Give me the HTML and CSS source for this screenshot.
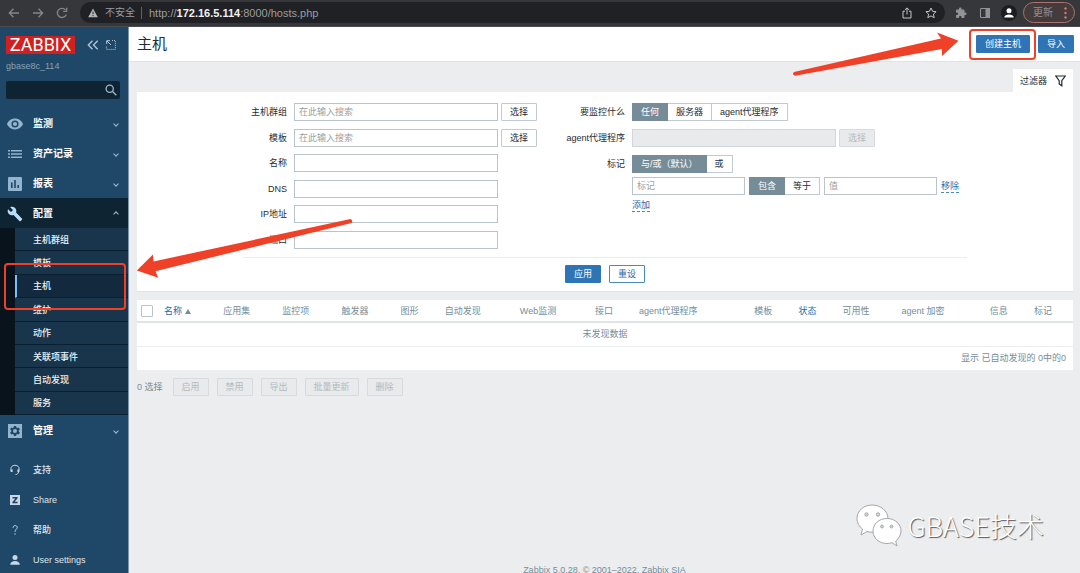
FILE: index.html
```html
<!DOCTYPE html>
<html lang="zh-CN">
<head>
  <meta charset="UTF-8" />
  <title>主机</title>
  <meta name="viewport" content="width=device-width, initial-scale=1.0" />
  <link rel="stylesheet" href="styles.css">
</head>
<body>
  <div class="browser-bar">
    <button class="nav-btn" type="button" aria-label="Back"><svg width="12" height="12" viewBox="0 0 12 12"><path d="M11 6H1.5M5.5 1.8L1.3 6l4.2 4.2"/></svg></button>
    <button class="nav-btn" type="button" aria-label="Forward"><svg width="12" height="12" viewBox="0 0 12 12"><path d="M1 6h9.500M6.500 1.800L10.700 6l-4.200 4.200"/></svg></button>
    <button class="nav-btn" type="button" aria-label="Reload"><svg width="12" height="12" viewBox="0 0 12 12"><path d="M10.300 7.500A4.600 4.600 0 1 1 9.500 2.900M10.700 0.800v3.500H7.200"/></svg></button>
    <div class="address">
      <svg class="warn" width="10" height="10" viewBox="0 0 10 10"><path d="M5 .5L9.800 9.300H.2z"/><path class="warn-mark" d="M5 3.600v2.600M5 7.100v1.100"/></svg>
      <span class="insecure">不安全</span>
      <span class="url">http://<b>172.16.5.114</b>:8000/hosts.php</span>
      <svg class="line-icon" width="12" height="12" viewBox="0 0 12 12"><path d="M4 4.200H2v6.800h8V4.200H8M6 7.500V1M3.900 2.900L6 .9l2.100 2"/></svg>
      <svg class="line-icon star" width="12" height="12" viewBox="0 0 12 12"><path d="M6 1l1.500 3.300 3.600.4-2.700 2.400.8 3.600L6 8.900l-3.200 1.800.8-3.600L.9 4.700l3.600-.4z"/></svg>
    </div>
    <svg class="puzzle" width="12" height="12" viewBox="0 0 24 24"><path d="M20.500 11H19V7a2 2 0 0 0-2-2h-4V3.500a2.500 2.500 0 0 0-5 0V5H4a2 2 0 0 0-2 2v3.800h1.500a2.700 2.700 0 0 1 0 5.400H2V20a2 2 0 0 0 2 2h3.800v-1.500a2.700 2.700 0 0 1 5.400 0V22H17a2 2 0 0 0 2-2v-4h1.500a2.500 2.500 0 0 0 0-5z"/></svg>
    <svg class="panel" width="12" height="12" viewBox="0 0 12 12"><path d="M1.500 1.500h9v9h-9z"/><path class="solid" d="M7 1.500h3.500v9H7z"/></svg>
    <svg class="avatar" width="16" height="16" viewBox="0 0 16 16"><circle class="avatar-bg" cx="8" cy="8" r="8"/><circle cx="8" cy="5.800" r="2.500"/><path d="M3.200 12.500c0-4 9.600-4 9.600 0z"/></svg>
    <button class="update-btn" type="button">更新
      <svg width="3" height="12" viewBox="0 0 3 12"><circle cx="1.500" cy="1.500" r="1.200"/><circle cx="1.500" cy="6" r="1.200"/><circle cx="1.500" cy="10.500" r="1.200"/></svg>
    </button>
  </div>

  <div class="layout">
    <aside class="sidebar">
      <div class="brand">
        <a class="logo" href="#">ZABBIX</a>
        <svg class="collapse" width="12" height="10" viewBox="0 0 12 10"><path d="M5.500 .8L1.300 5l4.200 4.200M10.700 .8L6.500 5l4.200 4.200"/></svg>
        <svg class="kiosk" width="10" height="10" viewBox="0 0 10 10"><path class="dots" d="M6 .6h3.400v8.800H.6V6"/><path d="M5 5L1 1M.7 4V.7H4"/></svg>
      </div>
      <div class="server">gbase8c_114</div>
      <form class="search">
        <input type="text" aria-label="搜索">
        <button type="button" aria-label="搜索"><svg width="12" height="12" viewBox="0 0 12 12"><circle cx="4.700" cy="4.700" r="3.600"/><path d="M7.500 7.500l3.800 3.800"/></svg></button>
      </form>

      <nav>
        <ul class="menu">
          <li><a href="#">
            <svg width="16" height="16" viewBox="0 0 16 16"><path fill-rule="evenodd" d="M8 2.600C4.400 2.600 1.300 4.800 0 8c1.300 3.200 4.400 5.400 8 5.400s6.700-2.200 8-5.400c-1.300-3.200-4.400-5.400-8-5.400zm0 9a3.600 3.600 0 1 1 0-7.200 3.600 3.600 0 0 1 0 7.200zm0-1.500a2.100 2.100 0 1 0 0-4.200 2.100 2.100 0 0 0 0 4.200z"/></svg>
            <span>监测</span><i class="chevron"></i></a></li>
          <li><a href="#">
            <svg width="16" height="16" viewBox="0 0 16 16"><path d="M1 4h2v1.600H1zM4 4h11v1.600H4zM1 7.200h2v1.600H1zM4 7.200h11v1.600H4zM1 10.400h2V12H1zM4 10.400h11V12H4z"/></svg>
            <span>资产记录</span><i class="chevron"></i></a></li>
          <li><a href="#">
            <svg width="16" height="16" viewBox="0 0 16 16"><path fill-rule="evenodd" d="M2 1h12a1 1 0 0 1 1 1v12a1 1 0 0 1-1 1H2a1 1 0 0 1-1-1V2a1 1 0 0 1 1-1zm2 5.500V12h1.600V6.500zM7.200 4v8h1.600V4zm3.200 5v3H12V9z"/></svg>
            <span>报表</span><i class="chevron"></i></a></li>
          <li class="open"><a href="#">
            <svg width="16" height="16" viewBox="0 0 24 24"><path d="M22.700 19l-9.100-9.100c.9-2.300.4-5-1.500-6.900-2-2-5-2.400-7.400-1.300L9 6 6 9 1.600 4.700C.4 7.100.9 10.100 2.900 12.100c1.900 1.900 4.600 2.400 6.900 1.500l9.100 9.100c.4.4 1 .4 1.400 0l2.300-2.300c.5-.4.5-1.100.1-1.400z"/></svg>
            <span>配置</span><i class="chevron up"></i></a>
            <ul class="submenu">
              <li><a href="#">主机群组</a></li>
              <li><a href="#">模板</a></li>
              <li><a class="current" href="#">主机</a></li>
              <li><a href="#">维护</a></li>
              <li><a href="#">动作</a></li>
              <li><a href="#">关联项事件</a></li>
              <li><a href="#">自动发现</a></li>
              <li><a href="#">服务</a></li>
            </ul>
          </li>
          <li><a href="#">
            <svg width="16" height="16" viewBox="0 0 16 16"><path fill-rule="evenodd" d="M1 1h14v14H1zM6.900 3l-.3 1.500-.9.500-1.500-.5-1.100 1.900L4.300 7.500v1L3.100 9.600l1.100 1.900 1.500-.5.900.5.300 1.500h2.200l.3-1.500.9-.5 1.500.5 1.100-1.900-1.200-1.100v-1l1.200-1.100-1.100-1.900-1.500.5-.9-.5L9.100 3zM8 6a2 2 0 1 1 0 4 2 2 0 0 1 0-4z"/></svg>
            <span>管理</span><i class="chevron"></i></a></li>
        </ul>
        <ul class="menu user-menu">
          <li><a href="#">
            <svg class="stroke" width="12" height="12" viewBox="0 0 12 12"><path d="M2.600 7.500C.8 3.500 3 1.300 6 1.300s5.200 2.200 3.400 6.200M9.500 8c-.3 1.700-1.200 2.500-3 2.500"/><path class="thick" d="M2.600 5.500v2.600M9.400 5.500v2.600"/></svg>
            <span>支持</span></a></li>
          <li><a href="#">
            <svg width="12" height="12" viewBox="0 0 12 12"><path fill-rule="evenodd" d="M1 1h10v10H1zM3.500 3v1.400h2.800L3.400 8v1.200h5.200V7.800H5.700l2.900-3.600V3z"/></svg>
            <span>Share</span></a></li>
          <li><a href="#">
            <svg class="stroke" width="12" height="12" viewBox="0 0 12 12"><path d="M4 3.800C4 .8 8.200.9 8.200 3.500 8.200 5.200 6 5.400 6 7.800M6 9.300v1.500"/></svg>
            <span>帮助</span></a></li>
          <li><a href="#">
            <svg width="12" height="12" viewBox="0 0 12 12"><circle cx="6" cy="3.600" r="2.500"/><path d="M1.200 10.700c0-4.800 9.600-4.800 9.600 0z"/></svg>
            <span>User settings</span></a></li>
        </ul>
      </nav>
    </aside>

    <div class="page">
      <header class="page-header">
        <h1>主机</h1>
        <button class="btn primary" type="button">创建主机</button>
        <button class="btn primary" type="button">导入</button>
      </header>

      <main>
        <div class="filter-tab">
          <a href="#">过滤器
            <svg width="11" height="12" viewBox="0 0 11 12"><path d="M.8 1h9.400L6.800 5.600v5.200L4.200 9V5.600z"/></svg>
          </a>
        </div>
        <form class="filter">
          <div class="filter-columns">
            <div class="filter-col left">
              <div class="field"><label for="groups">主机群组</label><input id="groups" type="text" placeholder="在此输入搜索"><button class="btn" type="button">选择</button></div>
              <div class="field"><label for="templates">模板</label><input id="templates" type="text" placeholder="在此输入搜索"><button class="btn" type="button">选择</button></div>
              <div class="field"><label for="name">名称</label><input id="name" type="text"></div>
              <div class="field"><label for="dns">DNS</label><input id="dns" type="text"></div>
              <div class="field"><label for="ip">IP地址</label><input id="ip" type="text"></div>
              <div class="field"><label for="port">端口</label><input id="port" type="text"></div>
            </div>
            <div class="filter-col right">
              <div class="field">
                <span class="label">要监控什么</span>
                <div class="segmented"><button class="on" type="button">任何</button><button type="button">服务器</button><button type="button">agent代理程序</button></div>
              </div>
              <div class="field"><label for="proxy">agent代理程序</label><input id="proxy" type="text" disabled><button class="btn" type="button" disabled>选择</button></div>
              <div class="field tags">
                <span class="label">标记</span>
                <div class="tag-rows">
                  <div class="segmented"><button class="on" type="button">与/或（默认）</button><button type="button">或</button></div>
                  <div class="tag-row">
                    <input type="text" placeholder="标记" aria-label="标记">
                    <div class="segmented"><button class="on" type="button">包含</button><button type="button">等于</button></div>
                    <input type="text" placeholder="值" aria-label="值">
                    <a class="link" href="#">移除</a>
                  </div>
                  <a class="link" href="#">添加</a>
                </div>
              </div>
            </div>
          </div>
          <div class="filter-buttons">
            <button class="btn primary" type="button">应用</button>
            <button class="btn outline" type="button">重设</button>
          </div>
        </form>

        <table class="hosts">
          <colgroup>
            <col class="w-check"><col class="w-m"><col class="w-m"><col class="w-m"><col class="w-m"><col class="w-s"><col class="w-l"><col class="w-l"><col class="w-s"><col class="w-xxl"><col class="w-s"><col class="w-s"><col class="w-m"><col class="w-xl"><col class="w-s"><col class="w-s">
          </colgroup>
          <thead>
            <tr>
              <th><input type="checkbox" aria-label="全选"></th>
              <th><a href="#">名称 <i class="sort"></i></a></th>
              <th>应用集</th>
              <th>监控项</th>
              <th>触发器</th>
              <th>图形</th>
              <th>自动发现</th>
              <th>Web监测</th>
              <th>接口</th>
              <th>agent代理程序</th>
              <th>模板</th>
              <th><a href="#">状态</a></th>
              <th>可用性</th>
              <th>agent 加密</th>
              <th>信息</th>
              <th>标记</th>
            </tr>
          </thead>
          <tbody>
            <tr><td class="nothing" colspan="16">未发现数据</td></tr>
            <tr><td class="stats" colspan="16">显示 已自动发现的 0中的0</td></tr>
          </tbody>
        </table>

        <div class="actions">
          <span>0 选择</span>
          <button class="btn" type="button" disabled>启用</button>
          <button class="btn" type="button" disabled>禁用</button>
          <button class="btn" type="button" disabled>导出</button>
          <button class="btn" type="button" disabled>批量更新</button>
          <button class="btn" type="button" disabled>删除</button>
        </div>
      </main>

      <footer>Zabbix 5.0.28. © 2001–2022, Zabbix SIA</footer>
    </div>
  </div>

  <!-- annotations over the page -->
  <div class="mark mark-create"></div>
  <div class="mark mark-hosts"></div>
  <svg class="arrow arrow-create" width="170" height="48" viewBox="790 30 170 48"><path d="M794 72L941 38.500 937 32.500 958.500 40.800 942 56 942 49 795 75.800Q791.500 74.500 794 72z"/></svg>
  <svg class="arrow arrow-hosts" width="220" height="64" viewBox="136 216 220 64"><path d="M350.500 219L153.500 261.500 153 254.500 136.800 270.500 158.200 277.800 155.500 271.200 351.500 223Q353.500 220.500 350.500 219z"/></svg>
  <div class="watermark">
    <svg width="46" height="44" viewBox="0 0 46 44">
      <path d="M16 1C7.500 1 1 7 1 14.500c0 4.500 2 8 5.500 10.500L5 31l6-3.500c2 .6 4 .8 6 .7 10 0 15-6 15-13.500S25 1 16 1z"/>
      <path d="M31 14.500c-8 0-14 5.500-14 12.500s6 12.500 14 12.500c1.800 0 3.300-.3 5-.8l5 3.300-1.300-5C43 34.500 45 31 45 27c0-7-6-12.500-14-12.500z"/>
      <circle class="eye" cx="10.500" cy="10.500" r="1.700"/><circle class="eye" cx="22" cy="10.500" r="1.700"/>
      <circle class="eye" cx="26" cy="22.500" r="1.400"/><circle class="eye" cx="35.500" cy="22.500" r="1.400"/>
    </svg>
    <span>GBASE技术</span>
  </div>
</body>
</html>
```
FILE: styles.css
```css
* {
  box-sizing: border-box;
}

body {
  margin: 0;
  height: 100vh;
  display: flex;
  flex-direction: column;
  overflow: hidden;
  position: relative;
  font-family: "Liberation Sans", "Noto Sans CJK SC", sans-serif;
  font-size: 9px;
  line-height: 12px;
  color: #1f2c33;
  background: #ebedef;
}

button,
input {
  font: inherit;
  color: inherit;
  margin: 0;
}

a {
  color: #0275b8;
  text-decoration: none;
}

ul {
  list-style: none;
  margin: 0;
  padding: 0;
}

svg {
  flex-shrink: 0;
}

/* Browser bar */
.browser-bar {
  height: 27px;
  flex-shrink: 0;
  display: flex;
  align-items: center;
  padding: 0 5px 1px 8px;
  background: #36373b;
  border-bottom: 1px solid #4a4b4f;
}

.nav-btn {
  display: flex;
  padding: 0;
  margin-right: 12px;
  border: 0;
  background: none;
}

.nav-btn svg {
  fill: none;
  stroke: #85868a;
  stroke-width: 1.3;
}

.address {
  flex: 1;
  height: 21px;
  display: flex;
  align-items: center;
  padding: 0 8px;
  margin-right: 10px;
  border-radius: 11px;
  background: #202124;
  color: #9a9da1;
  font-family: "Liberation Sans", "Noto Sans CJK SC", sans-serif;
  font-size: 11px;
}

.warn {
  fill: #b5b6b9;
  margin-right: 7px;
}

.warn-mark {
  stroke: #202124;
}

.insecure {
  font-size: 10px;
  padding-right: 6px;
  margin-right: 7px;
  border-right: 1px solid #5f6064;
}

.url {
  flex: 1;
}

.url b {
  color: #f1f1f1;
}

.line-icon {
  fill: none;
  stroke: #c4c5c8;
}

.star {
  margin-left: 12px;
}

.puzzle {
  fill: #929397;
  margin-right: 12px;
}

.panel {
  fill: none;
  stroke: #929397;
  margin-right: 10px;
}

.panel .solid {
  fill: #929397;
}

.avatar {
  fill: #fff;
  margin-right: 6px;
}

.avatar-bg {
  fill: #1c1d20;
}

.update-btn {
  height: 21px;
  display: flex;
  align-items: center;
  gap: 11px;
  padding: 0 7px 0 9px;
  border: 1px solid #a9746f;
  border-radius: 11px;
  background: #443b3d;
  color: #97908f;
  font-size: 10px;
}

.update-btn svg {
  fill: #d9786e;
}

/* Sidebar */
.layout {
  flex: 1;
  min-height: 0;
  display: flex;
}

.sidebar {
  width: 129px;
  flex-shrink: 0;
  background: #1f4868;
  border-right: 1px solid #7d95a8;
}

.brand {
  display: flex;
  align-items: center;
  padding: 9px 0 0 6px;
}

.logo {
  width: 69px;
  height: 18px;
  margin-right: 12px;
  background: #d0201f;
  color: #fff;
  font-family: Roboto, sans-serif;
  font-size: 18px;
  line-height: 18px;
  text-align: center;
}

.collapse,
.kiosk {
  fill: none;
  stroke: #b4c8d8;
  stroke-width: 1.3;
}

.kiosk {
  stroke-width: 1;
  margin-left: 7px;
}

.dots {
  stroke-dasharray: 1 1;
}

.server {
  padding: 6px;
  color: #86a0b3;
}

.search {
  display: flex;
  align-items: center;
  height: 18px;
  margin: 3px 8px 9px 6px;
  background: #0f2433;
  border-radius: 2px;
}

.search input {
  flex: 1;
  min-width: 0;
  height: 18px;
  padding: 0 4px;
  border: 0;
  background: none;
  color: #fff;
}

.search button {
  display: flex;
  padding: 0 3px;
  border: 0;
  background: none;
}

.search svg {
  fill: none;
  stroke: #9db6c8;
  stroke-width: 1.3;
}

.menu > li > a {
  height: 30px;
  display: flex;
  align-items: center;
  padding: 1px 8px 0 7px;
  color: #fff;
  font-size: 10px;
  font-weight: bold;
}

.menu > li > a span {
  flex: 1;
  margin-left: 10px;
}

.menu svg {
  fill: #93b4ce;
}

.chevron {
  width: 4px;
  height: 4px;
  margin: 0 2px;
  border: solid #a3bccf;
  border-width: 0 1px 1px 0;
  transform: rotate(45deg);
}

.chevron.up {
  transform: rotate(225deg);
}

.menu > .open > a {
  background: #0f2433;
}

.open svg {
  fill: #b9dcf8;
}

.submenu {
  height: 187px;
  display: grid;
  grid-auto-rows: 1fr;
  border-left: 15px solid #08131b;
  background: #19354b;
}

.submenu a {
  height: 100%;
  display: flex;
  align-items: center;
  padding: 1px 0 0 18px;
  border-bottom: 1px solid #0c1f2e;
  color: #eef3f7;
  font-weight: 500;
}

.submenu .current {
  padding-left: 16px;
  border-left: 2px solid #7fbff5;
  background: #13293d;
}

.user-menu {
  margin-top: 9px;
}

.user-menu > li > a {
  padding-left: 9px;
  color: #dde6ed;
  font-size: 9px;
  font-weight: 500;
}

.user-menu > li > a span {
  margin-left: 12px;
}

.user-menu svg {
  fill: #c9d8e4;
}

.user-menu .stroke {
  fill: none;
  stroke: #c9d8e4;
}

.user-menu .thick {
  stroke-width: 2;
}

/* Page */
.page {
  flex: 1;
  min-width: 0;
  display: flex;
  flex-direction: column;
}

.page-header {
  height: 35px;
  flex-shrink: 0;
  display: flex;
  align-items: center;
  gap: 8px;
  padding: 0 6px 0 8px;
  background: #fff;
  border-bottom: 1px solid #dfe4e7;
}

h1 {
  flex: 1;
  margin: 0;
  font-size: 15px;
  font-weight: normal;
  line-height: 20px;
}

main {
  flex: 1;
  padding: 7px 7px 0 8px;
}

.btn {
  height: 18px;
  padding: 0 8px;
  border: 1px solid #c0cbd1;
  border-radius: 1px;
  background: #fff;
  line-height: 16px;
  white-space: nowrap;
}

.btn.primary {
  background: #2f74b5;
  border-color: #2f74b5;
  color: #fff;
}

.btn.outline {
  border-color: #4a88c0;
  color: #1f69ac;
}

.btn:disabled {
  background: #e9eaeb;
  border-color: #d5dbdf;
  color: #b0babf;
}

/* Filter */
.filter-tab {
  display: flex;
  justify-content: flex-end;
}

.filter-tab a {
  height: 23px;
  display: flex;
  align-items: center;
  gap: 8px;
  padding: 0 7px;
  background: #fff;
  color: #1f2c33;
}

.filter-tab svg {
  fill: none;
  stroke: #1f2c33;
  stroke-width: 1.2;
}

.filter {
  display: flex;
  flex-direction: column;
  align-items: center;
  padding: 11px 12px 8px;
  background: #fff;
  border-bottom: 1px solid #dfe4e7;
}

.filter-columns {
  width: 724px;
  display: flex;
  gap: 28px;
  padding-bottom: 8px;
  border-bottom: 1px solid #ebeef0;
}

.filter-col {
  display: flex;
  flex-direction: column;
  gap: 8px;
}

.filter-col.left {
  height: 146px;
  gap: 0;
  justify-content: space-between;
}

.field {
  display: flex;
  align-items: center;
}

.field label,
.field .label {
  width: 44px;
  margin-right: 7px;
  text-align: right;
  white-space: nowrap;
}

.right .field label,
.right .field .label {
  width: 60px;
}

.filter input {
  width: 204px;
  height: 18px;
  padding: 0 4px;
  border: 1px solid #b9c4ca;
  background: #fff;
}

.filter input::placeholder {
  color: #9a9fa2;
}

.filter input:disabled {
  background: #e9eaeb;
  border-color: #d0d6da;
}

.field .btn {
  margin-left: 3px;
}

.segmented {
  display: flex;
}

.segmented button {
  height: 18px;
  padding: 0 8px;
  border: 1px solid #c0cbd1;
  border-left-width: 0;
  background: #fff;
  line-height: 16px;
  white-space: nowrap;
}

.segmented .on {
  background: #768d99;
  border-color: #768d99;
  border-left-width: 1px;
  color: #fff;
}

.field.tags {
  align-items: flex-start;
}

.tags .label {
  line-height: 18px;
}

.tag-rows {
  display: flex;
  flex-direction: column;
  align-items: flex-start;
  gap: 4px;
}

.tag-row {
  display: flex;
  align-items: center;
  gap: 4px;
}

.filter .tag-row input {
  width: 113px;
}

.link {
  border-bottom: 1px dashed #4a88c0;
  color: #1f69ac;
}

.filter-buttons {
  display: flex;
  gap: 8px;
  padding-top: 7px;
}

/* Hosts table */
.hosts {
  width: 100%;
  margin-top: 8px;
  table-layout: fixed;
  border-collapse: collapse;
  background: #fff;
  color: #768d99;
}

.hosts th,
.hosts td {
  height: 24px;
  padding: 0 5px;
  font-weight: normal;
  text-align: left;
  white-space: nowrap;
}

.hosts th {
  height: 22px;
}

.hosts thead tr {
  border-bottom: 2px solid #dfe4e7;
}

.hosts tbody tr {
  border-bottom: 1px solid #ebeef0;
}

.hosts th a {
  color: #1f69ac;
}

.hosts input {
  display: block;
  appearance: none;
  width: 12px;
  height: 12px;
  margin-left: -1px;
  border: 1px solid #b9c4ca;
  border-radius: 1px;
  background: #fff;
}

.sort {
  display: inline-block;
  border: 3px solid transparent;
  border-top-width: 0;
  border-bottom: 5px solid #768d99;
}

.hosts .nothing {
  text-align: center;
}

.hosts .stats {
  padding-right: 7px;
  text-align: right;
}

.w-check {
  width: 22px;
}

.w-s {
  width: 44px;
}

.w-m {
  width: 59px;
}

.w-l {
  width: 75px;
}

.w-xl {
  width: 88px;
}

.w-xxl {
  width: 115px;
}

.actions {
  display: flex;
  align-items: center;
  gap: 8px;
  padding-top: 7px;
  color: #768d99;
}

.actions span {
  margin-right: 2px;
}

footer {
  height: 9px;
  flex-shrink: 0;
  text-align: center;
  color: #768d99;
}

/* Annotations */
.mark {
  position: absolute;
  border: 2px solid #ee4128;
  border-radius: 4px;
}

.mark-create {
  top: 29px;
  right: 44px;
  width: 67px;
  height: 31px;
}

.mark-hosts {
  top: 263px;
  left: 4px;
  width: 122px;
  height: 47px;
}

.arrow {
  position: absolute;
  fill: #ee4128;
}

.arrow-create {
  top: 30px;
  right: 120px;
}

.arrow-hosts {
  top: 216px;
  left: 136px;
}

.watermark {
  position: absolute;
  right: 36px;
  bottom: 25px;
  display: flex;
  align-items: center;
  gap: 5px;
  color: #fff;
  font-family: "Noto Sans CJK SC", sans-serif;
  font-size: 27px;
  font-weight: 300;
  line-height: 44px;
  text-shadow: 1px 1px 1px #555;
}

.watermark svg {
  fill: #fff;
  stroke: #a5a7a9;
  stroke-width: 1;
}

.watermark .eye {
  fill: #d5d7d9;
}
```
